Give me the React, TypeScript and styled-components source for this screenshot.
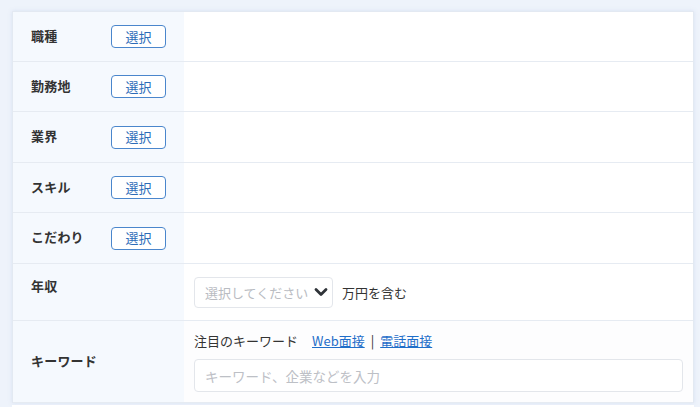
import * as React from 'react'
import styled, { createGlobalStyle } from 'styled-components'

const GlobalStyle = createGlobalStyle`
  html, body {
    margin: 0;
    padding: 0;
    background-color: #eef3fb;
    font-family: "Noto Sans CJK JP", "Noto Sans", sans-serif;
    color: #333;
  }
`

const Page = styled.div`
  padding: 11px 6px 0 12px;
  height: 407px;
  box-sizing: border-box;
  overflow: hidden;
`

const Table = styled.div`
  background-color: #fff;
  border: 1px solid #e3e9f2;
  border-bottom: none;
  box-shadow: 0 0 4px rgba(150, 175, 215, 0.25);
`

type RowProps = {
  h: number
}

const Row = styled.div<RowProps>`
  display: flex;
  height: ${props => props.h}px;
  border-bottom: 1px solid #e6ebf2;
  box-sizing: border-box;
`

const LabelCell = styled.div`
  flex: 0 0 171px;
  display: flex;
  align-items: center;
  padding-left: 18px;
  box-sizing: border-box;
  background-color: #f5f9fe;
`

type LabelProps = {
  lift?: number
}

const Label = styled.span<LabelProps>`
  width: 80px;
  font-size: 13px;
  font-weight: bold;
  line-height: 16px;
  color: #333;
  letter-spacing: 0.2px;
  margin-bottom: ${props => props.lift || 2}px;
`

const SelectBtn = styled.button`
  width: 55px;
  height: 23px;
  padding: 0;
  background-color: #fff;
  border: 1px solid #4a86cc;
  border-radius: 4px;
  color: #2c6cb8;
  font-family: inherit;
  font-size: 13px;
  line-height: 20px;
  cursor: pointer;
`

const ContentCell = styled.div`
  flex: 1;
  display: flex;
  align-items: center;
  padding: 0 10px;
  box-sizing: border-box;
`

const KeywordCell = styled(ContentCell)`
  flex-direction: column;
  align-items: stretch;
  justify-content: center;
  gap: 9px;
  background-color: #fdfdfe;
`

const SelectBox = styled.div`
  width: 139px;
  height: 31px;
  display: flex;
  align-items: center;
  justify-content: space-between;
  padding: 0 4px 0 10px;
  box-sizing: border-box;
  border: 1px solid #e3e6eb;
  border-radius: 4px;
  background-color: #fff;
`

const Placeholder = styled.span`
  font-size: 13px;
  color: #b9bcc2;
  white-space: nowrap;
`

const Unit = styled.span`
  margin-left: 9px;
  font-size: 13px;
  color: #333;
`

const HotLine = styled.div`
  display: flex;
  align-items: center;
  font-size: 13px;
  color: #333;
`

const HotTitle = styled.span`
  margin-right: 14px;
`

const Link = styled.a`
  color: #1f6ec9;
  text-decoration: underline;
  cursor: pointer;
`

const Sep = styled.span`
  margin: 0 6px;
  color: #333;
`

const TextInput = styled.div`
  height: 31px;
  display: flex;
  align-items: center;
  padding-left: 10px;
  border: 1px solid #e3e6eb;
  border-radius: 4px;
  background-color: #fff;
  font-size: 13.5px;
  color: #bdc0c6;
`

const Footer = styled.div`
  margin-top: 2px;
  height: 20px;
  background-color: #fff;
`

const Chevron = () => (
  <svg width="14" height="14" viewBox="0 0 14 14">
    <path d="M2 4.5 L7 9.5 L12 4.5" fill="none" stroke="#2f3338" strokeWidth="2.8" strokeLinecap="round" strokeLinejoin="round" />
  </svg>
)

const pickRows = [
  { title: '職種', h: 50 },
  { title: '勤務地', h: 50 },
  { title: '業界', h: 51 },
  { title: 'スキル', h: 50 },
  { title: 'こだわり', h: 51 },
]

export default function App() {
  return (
    <Page>
      <GlobalStyle />
      <Table>
        {pickRows.map(row => (
          <Row key={row.title} h={row.h}>
            <LabelCell>
              <Label>{row.title}</Label>
              <SelectBtn>選択</SelectBtn>
            </LabelCell>
            <ContentCell />
          </Row>
        ))}
        <Row h={57}>
          <LabelCell>
            <Label lift={12}>年収</Label>
          </LabelCell>
          <ContentCell>
            <SelectBox>
              <Placeholder>選択してください</Placeholder>
              <Chevron />
            </SelectBox>
            <Unit>万円を含む</Unit>
          </ContentCell>
        </Row>
        <Row h={82}>
          <LabelCell>
            <Label>キーワード</Label>
          </LabelCell>
          <KeywordCell>
            <HotLine>
              <HotTitle>注目のキーワード</HotTitle>
              <Link>Web面接</Link>
              <Sep>|</Sep>
              <Link>電話面接</Link>
            </HotLine>
            <TextInput>キーワード、企業などを入力</TextInput>
          </KeywordCell>
        </Row>
      </Table>
      <Footer />
    </Page>
  )
}
